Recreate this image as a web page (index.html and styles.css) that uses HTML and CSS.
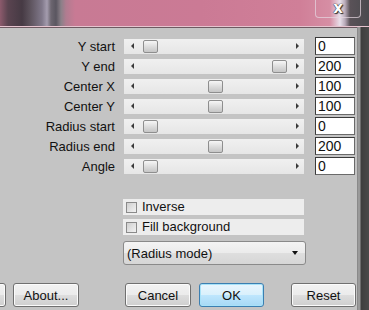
FILE: index.html
```html
<!DOCTYPE html>
<html lang="en">
<head>
    <meta charset="UTF-8">
    <title>Radial gradient</title>
    <link rel="stylesheet" href="styles.css">
</head>
<body>
    <div class="titlebar">
        <div class="close-btn"><span>x</span></div>
    </div>

    <div class="window">
        <div class="dialog">
            <div class="params">
                <div class="param">
                    <span class="param-label">Y start</span>
                    <div class="slider"><span class="arrow arrow-left"></span><div class="lane"><div class="thumb" style="margin-left: 0%"></div></div><span class="arrow arrow-right"></span></div>
                    <div class="value">0</div>
                </div>
                <div class="param">
                    <span class="param-label">Y end</span>
                    <div class="slider"><span class="arrow arrow-left"></span><div class="lane"><div class="thumb" style="margin-left: 100%"></div></div><span class="arrow arrow-right"></span></div>
                    <div class="value">200</div>
                </div>
                <div class="param">
                    <span class="param-label">Center X</span>
                    <div class="slider"><span class="arrow arrow-left"></span><div class="lane"><div class="thumb" style="margin-left: 50%"></div></div><span class="arrow arrow-right"></span></div>
                    <div class="value">100</div>
                </div>
                <div class="param">
                    <span class="param-label">Center Y</span>
                    <div class="slider"><span class="arrow arrow-left"></span><div class="lane"><div class="thumb" style="margin-left: 50%"></div></div><span class="arrow arrow-right"></span></div>
                    <div class="value">100</div>
                </div>
                <div class="param">
                    <span class="param-label">Radius start</span>
                    <div class="slider"><span class="arrow arrow-left"></span><div class="lane"><div class="thumb" style="margin-left: 0%"></div></div><span class="arrow arrow-right"></span></div>
                    <div class="value">0</div>
                </div>
                <div class="param">
                    <span class="param-label">Radius end</span>
                    <div class="slider"><span class="arrow arrow-left"></span><div class="lane"><div class="thumb" style="margin-left: 50%"></div></div><span class="arrow arrow-right"></span></div>
                    <div class="value">200</div>
                </div>
                <div class="param">
                    <span class="param-label">Angle</span>
                    <div class="slider"><span class="arrow arrow-left"></span><div class="lane"><div class="thumb" style="margin-left: 0%"></div></div><span class="arrow arrow-right"></span></div>
                    <div class="value">0</div>
                </div>
            </div>

            <div class="options">
                <div class="check-row"><span class="checkbox"></span>Inverse</div>
                <div class="check-row"><span class="checkbox"></span>Fill background</div>
                <div class="dropdown">
                    <span>(Radius mode)</span>
                    <span class="dropdown-arrow"></span>
                </div>
            </div>

            <div class="buttons">
                <div class="btn btn-cut"></div>
                <div class="btn btn-about">About...</div>
                <div class="btn btn-cancel">Cancel</div>
                <div class="btn btn-ok">OK</div>
                <div class="btn btn-reset">Reset</div>
            </div>
        </div>
        <div class="frame"></div>
    </div>
</body>
</html>
```

FILE: styles.css
```css
/* Reset margin for body */
body {
    margin: 0;
    width: 369px;
    height: 310px;
    overflow: hidden;
    font-family: "Liberation Sans", Arial, sans-serif;
    font-size: 13px;
    color: #111;
    background: #c4c4c4;
}

/* Caption strip - blurred desktop behind the glass */
.titlebar {
    height: 26px;
    display: flex;
    justify-content: flex-end;
    border-bottom: 1px solid #e6c4cf;
    background:
        linear-gradient(90deg,
            #8c5a6c 0px, #5a4450 8px, #463a44 22px, #5c525c 30px,
            #80788a 42px, #a49cae 47px, #6c6670 51px, #5a5660 56px,
            #8a8088 61px, #b07c90 66px, #c87a94 75px, #cb7a95 200px,
            #d07f98 300px, #d68ea4 330px, #e8e0ea 340px, #b8aab8 345px,
            #5a5258 350px, #4a4a4e 369px);
}

.close-btn {
    width: 44px;
    height: 17px;
    margin-right: 8px;
    border: 1px solid rgba(230, 215, 225, 0.7);
    border-top: none;
    border-radius: 0 0 4px 4px;
    display: flex;
    justify-content: center;
    align-items: center;
}

.close-btn span {
    font-family: "DejaVu Sans", sans-serif;
    font-size: 15px;
    font-weight: bold;
    line-height: 15px;
    color: #fff;
    text-shadow: 0 0 1px #222, 0 0 1px #222, 1px 1px 1px #333;
}

.window {
    display: flex;
    height: 283px;
}

.dialog {
    width: 358px;
    border-top: 1px solid #6e5a62;
    background: #c4c4c4;
    padding-top: 9px;
}

/* Slider rows */
.params {
    display: flex;
    flex-direction: column;
    gap: 2px;
}

.param {
    display: flex;
    align-items: center;
    height: 18px;
}

.param-label {
    width: 115px;
    text-align: right;
    white-space: nowrap;
}

.slider {
    width: 180px;
    height: 15px;
    margin-left: 9px;
    display: flex;
    align-items: center;
    background: linear-gradient(#f0f0f0, #e6e6e6);
}

.arrow {
    width: 0;
    height: 0;
    border-top: 3px solid transparent;
    border-bottom: 3px solid transparent;
}

.arrow-left {
    margin-left: 7px;
    border-right: 3px solid #3a3a3a;
}

.arrow-right {
    margin-left: 9px;
    border-left: 3px solid #3a3a3a;
}

.lane {
    width: 129px;
    padding-right: 15px;
    margin-left: 9px;
    display: flex;
}

.thumb {
    width: 13px;
    height: 11px;
    border: 1px solid #8e8e8e;
    border-radius: 2px;
    background: linear-gradient(#f6f6f6, #d8d8d8 60%, #c6c6c6);
    flex-shrink: 0;
}

.value {
    width: 36px;
    height: 16px;
    margin-left: 11px;
    padding-left: 2px;
    line-height: 16px;
    font-size: 14px;
    background: #fff;
    border: 1px solid #6a6a6a;
    border-top-color: #3a3a3a;
    border-left-color: #3a3a3a;
}

/* Checkboxes and mode list */
.options {
    margin: 24px 0 0 123px;
    width: 181px;
    display: flex;
    flex-direction: column;
    gap: 4px;
}

.check-row {
    height: 16px;
    display: flex;
    align-items: center;
    background: #ededed;
    line-height: 16px;
}

.checkbox {
    width: 9px;
    height: 9px;
    margin: 0 5px 0 3px;
    border: 1px solid #8a8a8a;
    background: linear-gradient(135deg, #cfcfcf, #f2f2f2);
}

.dropdown {
    margin-top: 2px;
    width: 178px;
    height: 22px;
    padding-left: 3px;
    display: flex;
    align-items: center;
    justify-content: space-between;
    border: 1px solid #8a8a8a;
    border-radius: 3px;
    background: linear-gradient(#f4f4f4, #ebebeb 50%, #dedede 51%, #d6d6d6);
}

.dropdown-arrow {
    width: 0;
    height: 0;
    margin-right: 7px;
    border-left: 3px solid transparent;
    border-right: 3px solid transparent;
    border-top: 4px solid #111;
}

/* Bottom buttons */
.buttons {
    display: flex;
    margin-top: 18px;
}

.btn {
    height: 22px;
    display: flex;
    align-items: center;
    justify-content: center;
    border: 1px solid #707070;
    border-radius: 3px;
    box-shadow: inset 0 0 0 1px #fbfbfb;
    background: linear-gradient(#f2f2f2, #ebebeb 50%, #dddddd 51%, #cfcfcf);
    flex-shrink: 0;
}

.btn-cut {
    width: 18px;
    margin-left: -14px;
}

.btn-about {
    width: 64px;
    margin-left: 7px;
}

.btn-cancel {
    width: 64px;
    margin-left: 46px;
}

.btn-ok {
    width: 63px;
    margin-left: 8px;
    border-color: #3c7fb1;
    box-shadow: inset 0 0 0 1px #a8e2f8;
    background: linear-gradient(#eaf6fd, #d9f0fc 50%, #bee6fd 51%, #a7d9f5);
}

.btn-reset {
    width: 63px;
    margin-left: 27px;
}

/* Right edge of the window frame */
.frame {
    width: 11px;
    border-left: 1px solid #8a8a8a;
    background: linear-gradient(90deg, #9a9a9a 0px, #9a9a9a 2px, #3e3e3e 3px, #4a4a4a 11px);
}
```
